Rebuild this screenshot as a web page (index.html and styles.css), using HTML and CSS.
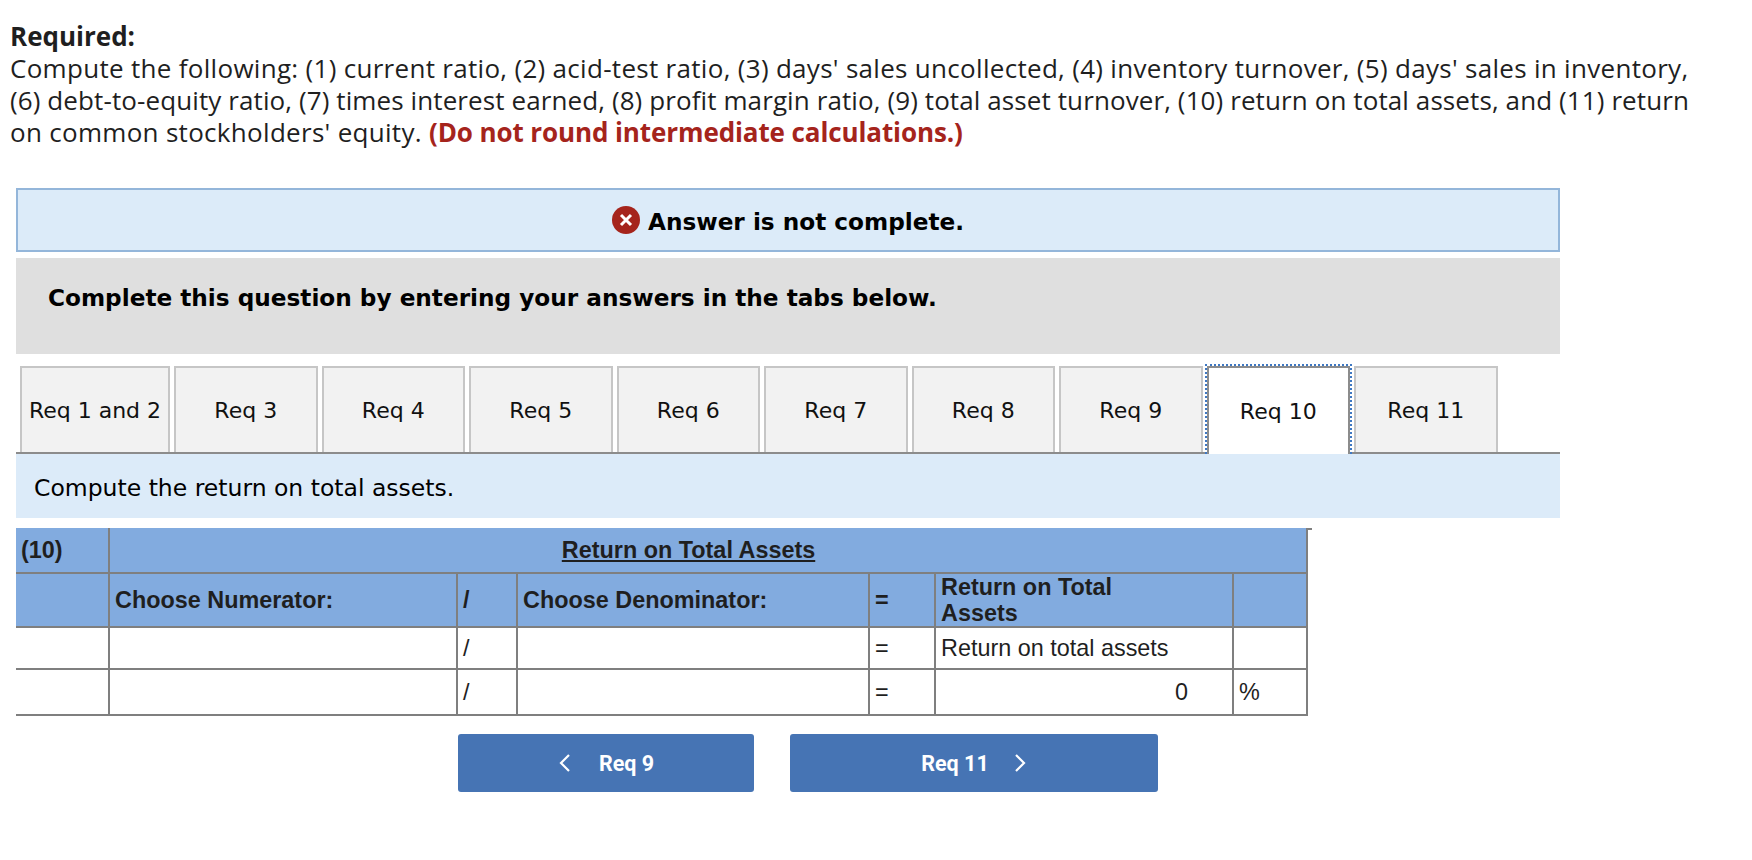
FILE: index.html
```html
<!DOCTYPE html>
<html lang="en">
<head>
    <meta charset="UTF-8">
    <title>Required</title>
    <link rel="stylesheet" href="styles.css">
</head>
<body>
    <!-- Aufgabentext -->
    <div class="question">
        <div class="required">Required:</div>
        <p>Compute the following: (1) current ratio, (2) acid-test ratio, (3) days' sales uncollected, (4) inventory turnover, (5) days' sales in inventory,<br>
        <span class="tight">(6) debt-to-equity ratio, (7) times interest earned, (8) profit margin ratio, (9) total asset turnover, (10) return on total assets, and (11) return</span><br>
        on common stockholders' equity. <b class="warning">(Do not round intermediate calculations.)</b></p>
    </div>

    <div class="panel">
        <div class="alert">
            <svg class="alert-icon" width="28" height="28" viewBox="0 0 28 28">
                <circle cx="14" cy="14" r="14" fill="#a5241c"/>
                <path d="M9 9 L19 19 M19 9 L9 19" stroke="#fff" stroke-width="3" fill="none"/>
            </svg>
            <span>Answer is not complete.</span>
        </div>

        <div class="instructions">Complete this question by entering your answers in the tabs below.</div>

        <!-- Tabs -->
        <div class="tabs">
            <div class="tab tab-first">Req 1 and 2</div>
            <div class="tab">Req 3</div>
            <div class="tab">Req 4</div>
            <div class="tab">Req 5</div>
            <div class="tab">Req 6</div>
            <div class="tab">Req 7</div>
            <div class="tab">Req 8</div>
            <div class="tab">Req 9</div>
            <div class="tab tab-active">Req 10</div>
            <div class="tab">Req 11</div>
        </div>

        <div class="tab-prompt">Compute the return on total assets.</div>

        <!-- Tabelle -->
        <table class="ratio-table">
            <colgroup>
                <col class="col-label">
                <col class="col-numerator">
                <col class="col-sign">
                <col class="col-denominator">
                <col class="col-equals">
                <col class="col-result">
                <col class="col-unit">
            </colgroup>
            <tr class="row-title">
                <th class="left">(10)</th>
                <th colspan="6" class="title"><u>Return on Total Assets</u></th>
            </tr>
            <tr class="row-head">
                <th></th>
                <th class="left">Choose Numerator:</th>
                <th class="left">/</th>
                <th class="left">Choose Denominator:</th>
                <th class="left">=</th>
                <th class="left">Return on Total<br>Assets</th>
                <th></th>
            </tr>
            <tr class="row-text">
                <td></td>
                <td></td>
                <td>/</td>
                <td></td>
                <td>=</td>
                <td>Return on total assets</td>
                <td></td>
            </tr>
            <tr class="row-value">
                <td></td>
                <td></td>
                <td>/</td>
                <td></td>
                <td>=</td>
                <td class="number">0</td>
                <td>%</td>
            </tr>
        </table>

        <!-- Navigation -->
        <div class="nav-buttons">
            <button class="nav-btn nav-prev">
                <svg width="14" height="20" viewBox="0 0 14 20"><path d="M11 2 L3 10 L11 18" stroke="#fff" stroke-width="2.2" fill="none"/></svg>
                Req 9
            </button>
            <button class="nav-btn nav-next">
                Req 11
                <svg width="14" height="20" viewBox="0 0 14 20"><path d="M3 2 L11 10 L3 18" stroke="#fff" stroke-width="2.2" fill="none"/></svg>
            </button>
        </div>
    </div>
</body>
</html>
```

FILE: styles.css
```css
body {
    margin: 0;
    background-color: #fff;
    color: #1f1f1f;
    font-family: "Open Sans", sans-serif;
}

/* Aufgabentext */
.question {
    padding: 20px 0 0 10px;
    width: 1710px;
    font-size: 26px;
    line-height: 32px;
    height: 188px;
    box-sizing: border-box;
}

.question p {
    margin: 0;
    letter-spacing: 0.3px;
    white-space: nowrap;
}

.question .tight {
    letter-spacing: 0.1px;
}

.required {
    font-weight: 700;
}

.question .warning {
    color: #a5241c;
    letter-spacing: -0.1px;
}

.panel {
    margin-left: 16px;
    width: 1544px;
    font-family: "DejaVu Sans", sans-serif;
    color: #000;
}

.alert {
    height: 64px;
    box-sizing: border-box;
    border: 2px solid #94b6da;
    padding-top: 2px;
    background-color: #dcebf9;
    display: flex;
    justify-content: center;
    align-items: center;
    gap: 8px;
    font-size: 23.2px;
    font-weight: 700;
}

.alert-icon {
    margin-top: -2px;
}

.instructions {
    margin-top: 6px;
    height: 96px;
    box-sizing: border-box;
    padding: 26px 0 0 32px;
    background-color: #dfdfdf;
    font-size: 23.2px;
    font-weight: 700;
}

/* Tabs */
.tabs {
    margin-top: 12px;
    padding-left: 4px;
    display: flex;
    gap: 4px;
    height: 88px;
    box-sizing: border-box;
    border-bottom: 2px solid #8c8c8c;
}

.tab {
    width: 143.5px;
    box-sizing: border-box;
    border: 2px solid #c6c6c6;
    border-bottom: none;
    background-color: #f2f2f2;
    display: flex;
    justify-content: center;
    align-items: center;
    font-size: 22px;
    color: #111;
}

.tab-first {
    width: 150px;
}

.tab-active {
    position: relative;
    height: 88px;
    border-color: #8c8c8c;
    background-color: #fff;
}

.tab-active::after {
    content: "";
    position: absolute;
    top: -4px;
    left: -4px;
    right: -4px;
    bottom: 0;
    border: 2px dotted #3f78c2;
    border-bottom: none;
}

.tab-prompt {
    height: 64px;
    box-sizing: border-box;
    background-color: #dcebf9;
    padding: 3px 0 0 18px;
    display: flex;
    align-items: center;
    font-size: 23.5px;
}

/* Tabelle */
.ratio-table {
    position: relative;
    margin-top: 10px;
    width: 1291px;
    table-layout: fixed;
    border-collapse: collapse;
    font-family: "Liberation Sans", sans-serif;
    font-size: 23.4px;
    line-height: 26px;
    color: #1f1f1f;
}

.ratio-table::after {
    content: "";
    position: absolute;
    top: 0;
    right: -5px;
    width: 5px;
    height: 2px;
    background-color: #7f7f7f;
}

.col-label { width: 93px; }
.col-numerator { width: 348px; }
.col-sign { width: 60px; }
.col-denominator { width: 352px; }
.col-equals { width: 66px; }
.col-result { width: 298px; }
.col-unit { width: 74px; }

.ratio-table th,
.ratio-table td {
    border: 2px solid #7f7f7f;
    padding: 0 5px;
}

.ratio-table th:first-child,
.ratio-table td:first-child {
    border-left: none;
}

.ratio-table .row-title th {
    border-top: none;
}

.ratio-table th {
    background-color: #82abdf;
    font-weight: 700;
}

.left {
    text-align: left;
}

.ratio-table .title {
    text-align: center;
    padding-right: 44px;
}

.row-title { height: 45px; }
.row-head { height: 54px; }
.row-text { height: 42px; }
.row-value { height: 46px; }

.number {
    text-align: right;
}

.ratio-table .number {
    padding-right: 44px;
}

/* Navigation */
.nav-buttons {
    margin: 18px 0 0 442px;
    display: flex;
    gap: 36px;
}

.nav-btn {
    height: 58px;
    border: none;
    border-radius: 3px;
    background-color: #4674b4;
    color: #fff;
    font-family: "Roboto", sans-serif;
    font-size: 21.5px;
    font-weight: 700;
    display: flex;
    align-items: center;
    justify-content: center;
}

.nav-prev {
    width: 296px;
    padding-left: 6px;
    gap: 27px;
}

.nav-next {
    width: 368px;
    padding-right: 6px;
    gap: 24px;
}
```
